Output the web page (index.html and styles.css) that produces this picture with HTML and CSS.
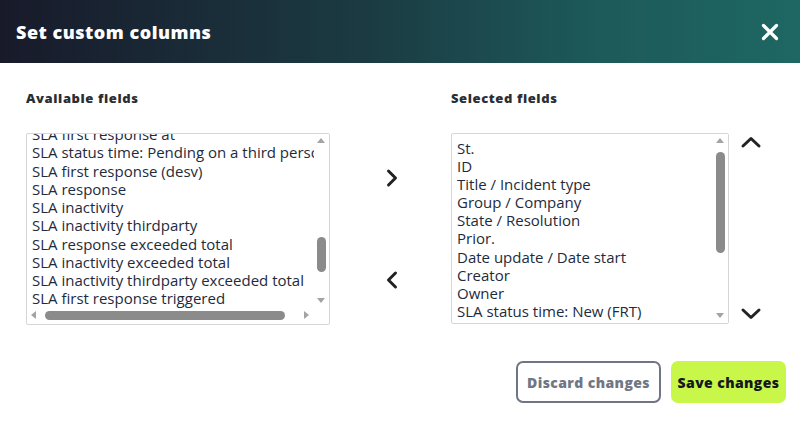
FILE: index.html
```html
<!DOCTYPE html>
<html>
<head>
<meta charset="utf-8">
<link rel="stylesheet" href="styles.css">
</head>
<body>
<div class="modal">
  <header class="top">
    <h1 class="title">Set custom columns</h1>
    <svg class="close" width="18" height="18" viewBox="0 0 18 18"><path d="M2.5 2.5 L15.5 15.5 M15.5 2.5 L2.5 15.5" stroke="#fff" stroke-width="3.2" stroke-linecap="round"/></svg>
  </header>
  <section class="content">
    <div class="panes">
      <div class="pane pane-left">
        <div class="label">Available fields</div>
        <div class="listbox listbox-h">
          <div class="items items-left">
            <div class="item">SLA first response at</div>
            <div class="item">SLA status time: Pending on a third person</div>
            <div class="item">SLA first response (desv)</div>
            <div class="item">SLA response</div>
            <div class="item">SLA inactivity</div>
            <div class="item">SLA inactivity thirdparty</div>
            <div class="item">SLA response exceeded total</div>
            <div class="item">SLA inactivity exceeded total</div>
            <div class="item">SLA inactivity thirdparty exceeded total</div>
            <div class="item">SLA first response triggered</div>
          </div>
          <div class="vbar">
            <span class="arr arr-up"></span>
            <div class="vtrack"><div class="vthumb vthumb-left"></div></div>
            <span class="arr arr-down"></span>
          </div>
          <div class="hbar">
            <span class="arr arr-left"></span>
            <div class="htrack"><div class="hthumb"></div></div>
            <span class="arr arr-right"></span>
          </div>
          <div class="corner"></div>
        </div>
      </div>
      <div class="movers">
        <svg class="chev chev-right" width="14" height="20" viewBox="0 0 14 20"><path d="M3.5 3 L10.5 10 L3.5 17" fill="none" stroke="#222" stroke-width="3" stroke-linecap="round" stroke-linejoin="round"/></svg>
        <svg class="chev chev-left" width="14" height="20" viewBox="0 0 14 20"><path d="M10.5 3 L3.5 10 L10.5 17" fill="none" stroke="#222" stroke-width="3" stroke-linecap="round" stroke-linejoin="round"/></svg>
      </div>
      <div class="pane pane-right">
        <div class="label">Selected fields</div>
        <div class="right-row">
          <div class="listbox listbox-v">
            <div class="items items-right">
              <div class="item item-r">St.</div>
              <div class="item item-r">ID</div>
              <div class="item item-r">Title / Incident type</div>
              <div class="item item-r">Group / Company</div>
              <div class="item item-r">State / Resolution</div>
              <div class="item item-r">Prior.</div>
              <div class="item item-r">Date update / Date start</div>
              <div class="item item-r">Creator</div>
              <div class="item item-r">Owner</div>
              <div class="item item-r">SLA status time: New (FRT)</div>
            </div>
            <div class="vbar">
              <span class="arr arr-up"></span>
              <div class="vtrack"><div class="vthumb vthumb-right"></div></div>
              <span class="arr arr-down"></span>
            </div>
          </div>
          <div class="order">
            <svg width="22" height="14" viewBox="0 0 22 14"><path d="M3 11 L11 3.5 L19 11" fill="none" stroke="#222" stroke-width="3" stroke-linecap="round" stroke-linejoin="round"/></svg>
            <svg width="22" height="14" viewBox="0 0 22 14"><path d="M3 3 L11 10.5 L19 3" fill="none" stroke="#222" stroke-width="3" stroke-linecap="round" stroke-linejoin="round"/></svg>
          </div>
        </div>
      </div>
    </div>
    <div class="actions">
      <button class="btn btn-discard">Discard changes</button>
      <button class="btn btn-save">Save changes</button>
    </div>
  </section>
</div>
</body>
</html>
```

FILE: styles.css
```css
* { box-sizing: border-box; }
html, body { margin: 0; padding: 0; background: #fff; }
body { width: 800px; height: 426px; overflow: hidden; font-family: "Open Sans", Lato, sans-serif; }

.top {
  height: 63px;
  display: flex;
  align-items: center;
  justify-content: space-between;
  padding: 0 21px 0 16px;
  background: linear-gradient(90deg, #181a2a 0%, #1b3a42 45%, #1d5a5a 75%, #1e6762 100%);
}
.title {
  margin: 0;
  color: #fff;
  font-family: "Open Sans", sans-serif;
  font-weight: 800;
  font-size: 18px;
  letter-spacing: 0.5px;
  line-height: 1;
  padding-top: 1px;
}
.close { display: block; margin-top: 1px; }

.content { padding: 27px 14px 0 26px; }

.panes {
  display: grid;
  grid-template-columns: 304px 121px auto;
  align-items: start;
}
.label {
  font-family: "Open Sans", sans-serif;
  font-weight: 800;
  font-size: 13px;
  line-height: 16px;
  color: #2a2d33;
  margin-bottom: 27px;
  letter-spacing: 0.6px;
}

.listbox {
  border: 1px solid #d6d6d6;
  border-radius: 2px;
  background: #fff;
  display: grid;
  overflow: hidden;
}
.listbox-h {
  width: 304px;
  height: 192px;
  grid-template-columns: 1fr 15px;
  grid-template-rows: 174px 15px;
}
.listbox-v {
  width: 278px;
  height: 191px;
  grid-template-columns: 1fr 15px;
  grid-template-rows: 189px;
}

.items { overflow: hidden; padding-left: 5px; }
.items-left .item:first-child { margin-top: -9px; }
.items-right { padding-top: 5px; }
.item {
  font-family: "Open Sans", sans-serif;
  font-size: 15px;
  line-height: 18.25px;
  color: #1e2b3c;
  white-space: nowrap;
}
.item-r { line-height: 18.1px; }

.vbar { display: flex; flex-direction: column; align-items: center; background: #fff; }
.vtrack { flex: 1; width: 100%; display: flex; flex-direction: column; align-items: center; }
.vthumb { width: 9px; border-radius: 5px; background: #8b8b8b; }
.vthumb-left { margin-top: 88px; height: 35px; }
.vthumb-right { margin-top: 3px; height: 101px; }

.hbar { display: flex; align-items: center; background: #fff; }
.htrack { flex: 1; height: 100%; display: flex; align-items: center; }
.hthumb { margin-left: 3px; width: 240px; height: 9px; border-radius: 5px; background: #8b8b8b; }
.corner { background: #fff; }

.arr { display: block; width: 15px; height: 15px; position: relative; flex: none; }
.arr::after { content: ""; position: absolute; width: 0; height: 0; }
.arr-up::after { left: 3px; top: 4px; border-left: 4.5px solid transparent; border-right: 4.5px solid transparent; border-bottom: 5px solid #a3a3a3; }
.arr-down::after { left: 3px; top: 5px; border-left: 4.5px solid transparent; border-right: 4.5px solid transparent; border-top: 5px solid #a3a3a3; }
.arr-left::after { left: 4px; top: 3px; border-top: 4.5px solid transparent; border-bottom: 4.5px solid transparent; border-right: 5px solid #a3a3a3; }
.arr-right::after { left: 5px; top: 3px; border-top: 4.5px solid transparent; border-bottom: 4.5px solid transparent; border-left: 5px solid #a3a3a3; }

.movers {
  display: flex;
  flex-direction: column;
  align-items: center;
  padding-top: 78px;
  gap: 82px;
  padding-left: 3px;
}
.chev { display: block; }

.right-row { display: flex; gap: 11px; align-items: stretch; }
.order {
  display: flex;
  flex-direction: column;
  justify-content: space-between;
  padding: 2px 0 3px;
}
.order svg { display: block; }

.actions {
  display: flex;
  justify-content: flex-end;
  gap: 10px;
  margin-top: 36px;
}
.btn {
  height: 42px;
  border-radius: 7px;
  font-family: "Open Sans", sans-serif;
  font-weight: 800;
  font-size: 14px;
  letter-spacing: 0.4px;
  padding: 0;
  cursor: pointer;
}
.btn-discard {
  width: 145px;
  background: #fff;
  border: 2px solid #6e7686;
  color: #707684;
}
.btn-save {
  width: 115px;
  background: #c8f74a;
  border: none;
  color: #15181c;
}
```
